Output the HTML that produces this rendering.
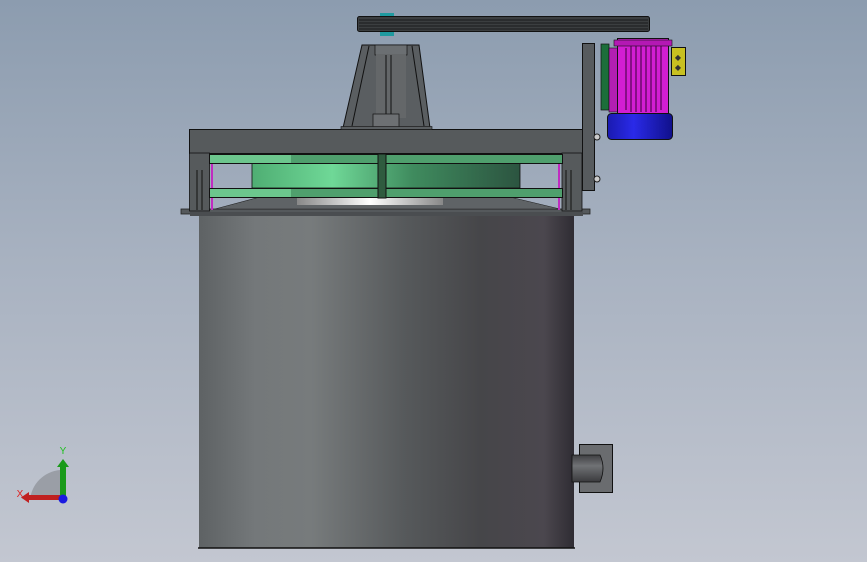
<!DOCTYPE html>
<html><head><meta charset="utf-8"><style>
html,body{margin:0;padding:0}
body{width:867px;height:562px;overflow:hidden;background:linear-gradient(#8c9caf 0%,#a7b1c0 45%,#c3c7d1 100%)}
svg{display:block}
</style></head><body>
<svg width="867" height="562" viewBox="0 0 867 562" xmlns="http://www.w3.org/2000/svg">
<defs>
<linearGradient id="tank" x1="0" x2="1" y1="0" y2="0">
<stop offset="0" stop-color="#5e6264"/><stop offset="0.15" stop-color="#74787a"/><stop offset="0.3" stop-color="#777b7c"/>
<stop offset="0.55" stop-color="#56595b"/><stop offset="0.75" stop-color="#464649"/><stop offset="0.92" stop-color="#4b474e"/><stop offset="1" stop-color="#2f2c33"/>
</linearGradient>
<linearGradient id="drum" x1="0" x2="1"><stop offset="0" stop-color="#4fae73"/><stop offset="0.3" stop-color="#6fd897"/><stop offset="0.6" stop-color="#3f8b5e"/><stop offset="1" stop-color="#2c5440"/></linearGradient>
<linearGradient id="blue" x1="0" x2="1"><stop offset="0" stop-color="#1a1ab0"/><stop offset="0.4" stop-color="#2a2ae8"/><stop offset="1" stop-color="#10108a"/></linearGradient>
<linearGradient id="shine" x1="0" x2="1"><stop offset="0" stop-color="#888"/><stop offset="0.5" stop-color="#fff"/><stop offset="1" stop-color="#888"/></linearGradient>
<linearGradient id="pipe" x1="0" y1="0" x2="0" y2="1"><stop offset="0" stop-color="#3f3f42"/><stop offset="0.4" stop-color="#707275"/><stop offset="1" stop-color="#3a3a3d"/></linearGradient>
</defs>
<!-- tank -->
<rect x="199" y="214" width="375" height="334" fill="url(#tank)"/>
<line x1="198" y1="548" x2="575" y2="548" stroke="#111" stroke-width="1.5"/>
<!-- outlet -->
<rect x="579.5" y="444.5" width="33" height="48" fill="#6a6c6f" stroke="#111"/>
<path d="M572 455 H600 Q606 468 600 482 H572 Z" fill="url(#pipe)" stroke="#111" stroke-width="0.8"/>
<!-- base plate / skirt -->
<rect x="181" y="209" width="409" height="5" fill="#55595c" stroke="#222" stroke-width="0.8"/>
<rect x="190" y="212" width="393" height="4" fill="#4a4d50"/>
<path d="M215 209 L260 197 H510 L560 209 Z" fill="#5f6366" stroke="#222" stroke-width="0.6"/>
<rect x="297" y="197" width="146" height="8" fill="url(#shine)"/>
<!-- frame -->
<rect x="189.5" y="129.5" width="393" height="24" fill="#565a5c" stroke="#111"/>
<rect x="189.5" y="153" width="20" height="58" fill="#565a5c" stroke="#111" stroke-width="0.8"/>
<rect x="562" y="153" width="20" height="58" fill="#565a5c" stroke="#111" stroke-width="0.8"/>
<rect x="211" y="160" width="2" height="50" fill="#c02bc0"/>
<rect x="558" y="160" width="2" height="50" fill="#c02bc0"/>
<line x1="197" y1="170" x2="197" y2="210" stroke="#111"/><line x1="202" y1="170" x2="202" y2="210" stroke="#111"/>
<line x1="566" y1="170" x2="566" y2="210" stroke="#111"/><line x1="571" y1="170" x2="571" y2="210" stroke="#111"/>
<!-- drum -->
<rect x="252" y="163" width="268" height="25" fill="url(#drum)" stroke="#111" stroke-width="0.8"/>
<rect x="209.5" y="154.5" width="353" height="9" fill="#4f9f6d" stroke="#111"/>
<rect x="209.5" y="188.5" width="353" height="9" fill="#4f9f6d" stroke="#111"/>
<rect x="210" y="155" width="81" height="8" fill="#6cc68d"/><rect x="210" y="189" width="81" height="8" fill="#6cc68d"/>
<rect x="378" y="154" width="8" height="44" fill="#2f5b3f" stroke="#111"/>
<!-- cone -->
<path d="M362 45 H419 L430 128 H343 Z" fill="#5a5e61" stroke="#111"/>
<path d="M369 46 L352 126 M412 46 L424 126" stroke="#111" stroke-width="1"/>
<rect x="375" y="45" width="32" height="10" fill="#6b6f72" stroke="#111" stroke-width="0.7"/>
<rect x="376" y="54" width="30" height="64" fill="#646769"/>
<line x1="386" y1="55" x2="386" y2="128" stroke="#111"/><line x1="391" y1="55" x2="391" y2="128" stroke="#111"/>
<rect x="373" y="114" width="26" height="14" fill="#6d7073" stroke="#111" stroke-width="0.7"/>
<rect x="341" y="126.5" width="91" height="3" fill="#5a5e61" stroke="#111" stroke-width="0.6"/>
<!-- belt -->
<rect x="380" y="13" width="14" height="23" fill="#1f9aa0"/>
<rect x="357.5" y="16.5" width="292" height="15" rx="2" fill="#3b3e40" stroke="#111"/>
<path d="M359 20 H648 M359 23 H648 M359 26 H648 M359 29 H648" stroke="#111" stroke-width="0.8"/>
<!-- side plate -->
<rect x="582.5" y="43.5" width="12" height="147" fill="#575b5e" stroke="#111"/>
<circle cx="597" cy="137" r="3" fill="#ccc" stroke="#222"/><circle cx="597" cy="179" r="3" fill="#ccc" stroke="#222"/>
<!-- motor -->
<rect x="601" y="44" width="8" height="66" fill="#1c6e3a" stroke="#111" stroke-width="0.7"/>
<rect x="607.5" y="113.5" width="65" height="26" rx="4" fill="url(#blue)" stroke="#111"/>
<rect x="609" y="48" width="10" height="64" fill="#b21fb2" stroke="#111" stroke-width="0.6"/>
<rect x="617.5" y="38.5" width="51" height="75" fill="#d21ed2" stroke="#111"/>
<rect x="614" y="40" width="58" height="6" fill="#b418b4" stroke="#111" stroke-width="0.6"/>
<path d="M626 48 V110 M631 46 V112 M636 46 V112 M641 46 V112 M646 46 V112 M651 46 V112 M656 46 V112 M661 46 V110" stroke="#3a003a" stroke-width="1"/>
<rect x="671.5" y="47.5" width="14" height="28" fill="#c8c020" stroke="#111"/>
<text x="678" y="60" font-size="8" text-anchor="middle" fill="#333" font-family="Liberation Sans,sans-serif">◆</text>
<text x="678" y="70" font-size="8" text-anchor="middle" fill="#333" font-family="Liberation Sans,sans-serif">◆</text>
<!-- triad -->
<path d="M30 500 A33 33 0 0 1 60 470 V500 Z" fill="#9a9ea6"/>
<rect x="25" y="495" width="38" height="5" fill="#c02020"/>
<path d="M21 497.5 L29 492 V503 Z" fill="#c02020"/>
<rect x="60" y="466" width="6" height="33" fill="#1a9a1a"/>
<path d="M63 459 L69 467 H57 Z" fill="#1a9a1a"/>
<circle cx="63" cy="499" r="4.5" fill="#1a1ae0"/>
<text x="63" y="454" font-size="10" fill="#20c020" text-anchor="middle" font-family="Liberation Sans,sans-serif">Y</text>
<text x="20" y="497" font-size="10" fill="#e02020" text-anchor="middle" font-family="Liberation Sans,sans-serif">X</text>
</svg>
</body></html>
